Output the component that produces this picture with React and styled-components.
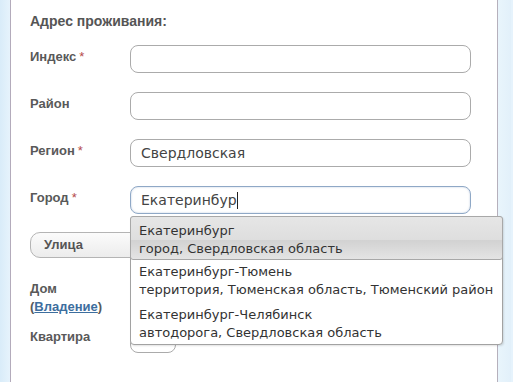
import React from "react";
import styled, { createGlobalStyle } from "styled-components";

const Global = createGlobalStyle`
  html, body { margin: 0; padding: 0; }
  body {
    width: 513px;
    height: 382px;
    overflow: hidden;
    background: #e6f3fc;
    font-family: "Liberation Sans", Arial, sans-serif;
  }
`;

const Page = styled.div`
  display: flex;
  height: 382px;
`;

const Side = styled.div`
  width: ${(p) => p.$w}px;
  flex: none;
  background: ${(p) => p.$bg};
`;

const Panel = styled.div`
  position: relative;
  width: 488px;
  flex: none;
  background: #fff;
  border-left: 1px solid #b3abbb;
  border-right: 1px solid #b6b0bc;
  padding: 15px 0 0 19px;
  box-sizing: border-box;
`;

const Heading = styled.div`
  font-weight: bold;
  font-size: 14px;
  color: #555;
  line-height: 12px;
  margin-bottom: 18px;
`;

const Form = styled.div`
  display: grid;
  grid-template-columns: 100px 341px;
  row-gap: 19px;
  align-items: start;
`;

const Label = styled.div`
  font-weight: bold;
  font-size: 13px;
  color: #595959;
  line-height: 18px;
  padding-top: ${(p) => p.$pt ?? 3}px;
  margin-bottom: ${(p) => p.$mb ?? 0}px;
`;

const Star = styled.span`
  color: #b54a4a;
  font-weight: normal;
  font-size: 13px;
  margin-left: 3px;
`;

const Link = styled.a`
  color: #3d6e9e;
  text-decoration: underline;
`;

const Field = styled.div`
  position: relative;
  box-sizing: border-box;
  height: 28px;
  width: ${(p) => p.$w || 341}px;
  border: 1px solid ${(p) => (p.$focus ? "#8fa8c6" : "#ababab")};
  border-radius: 8px;
  background: #fff;
  box-shadow: ${(p) => (p.$focus ? "inset 0 0 2px rgba(120,150,190,0.5)" : "none")};
  font-family: "DejaVu Sans", Verdana, sans-serif;
  font-size: 14px;
  color: #444;
  line-height: 26px;
  padding-left: 10px;
  display: flex;
  align-items: center;
`;

const Caret = styled.span`
  display: inline-block;
  width: 1px;
  height: 17px;
  background: #222;
`;

const StreetRow = styled.div`
  grid-column: 1 / span 2;
  display: flex;
  align-items: center;
  gap: 6px;
  margin-top: -2px;
`;

const SelectButton = styled.div`
  box-sizing: border-box;
  width: 112px;
  height: 26px;
  border: 1px solid #b4b4b4;
  border-radius: 10px;
  background: linear-gradient(#fbfbfb, #ececec);
  font-weight: bold;
  font-size: 13px;
  color: #555;
  line-height: 24px;
  padding-left: 13px;
`;

const Dropdown = styled.div`
  position: absolute;
  left: 119px;
  top: 216px;
  width: 373px;
  box-sizing: border-box;
  border: 1px solid #a2a2a2;
  border-radius: 4px;
  background: #fff;
  box-shadow: 1px 1px 2px rgba(0, 0, 0, 0.12);
  font-family: "DejaVu Sans", Verdana, sans-serif;
  font-size: 13px;
  color: #333;
  padding: 0;
`;

const Item = styled.div`
  box-sizing: border-box;
  height: ${(p) => p.$h}px;
  padding: 4px 0 0 8px;
  line-height: 18px;
  white-space: nowrap;
  border-radius: 3px;
  ${(p) =>
    p.$active &&
    `
    background: linear-gradient(#e6e6e6 0%, #dedede 55%, #d2d2d2 56%, #e4e4e4 100%);
    border: 1px solid #a8a8a8;
    margin: -1px;
    padding: 5px 0 0 8px;
    height: ${p.$h + 1}px;
  `}
`;

const items = [
  ["Екатеринбург", "город, Свердловская область"],
  ["Екатеринбург-Тюмень", "территория, Тюменская область, Тюменский район"],
  ["Екатеринбург-Челябинск", "автодорога, Свердловская область"],
];

export default function App() {
  return (
    <>
      <Global />
      <Page>
        <Side $w={10} $bg="linear-gradient(90deg,#d9ecf9,#e6f3fc)" />
        <Panel>
          <Heading>Адрес проживания:</Heading>
          <Form>
            <Label>
              Индекс<Star>*</Star>
            </Label>
            <Field />
            <Label>Район</Label>
            <Field />
            <Label>
              Регион<Star>*</Star>
            </Label>
            <Field>Свердловская</Field>
            <Label>
              Город<Star>*</Star>
            </Label>
            <Field $focus>
              Екатеринбур
              <Caret />
            </Field>
            <StreetRow>
              <SelectButton>Улица</SelectButton>
              <Field $w={223} />
            </StreetRow>
            <Label $pt={2} $mb={-11}>
              Дом
              <br />(<Link href="#">Владение</Link>)
            </Label>
            <Field />
            <Label>Квартира</Label>
            <Field $w={46} />
          </Form>
          <Dropdown>
            {items.map(([a, b], i) => (
              <Item key={i} $active={i === 0} $h={i === 2 ? 42 : 43}>
                {a}
                <br />
                {b}
              </Item>
            ))}
          </Dropdown>
        </Panel>
        <Side $w={13} $bg="linear-gradient(90deg,#e9f5fc,#e2f0fa)" />
      </Page>
    </>
  );
}
